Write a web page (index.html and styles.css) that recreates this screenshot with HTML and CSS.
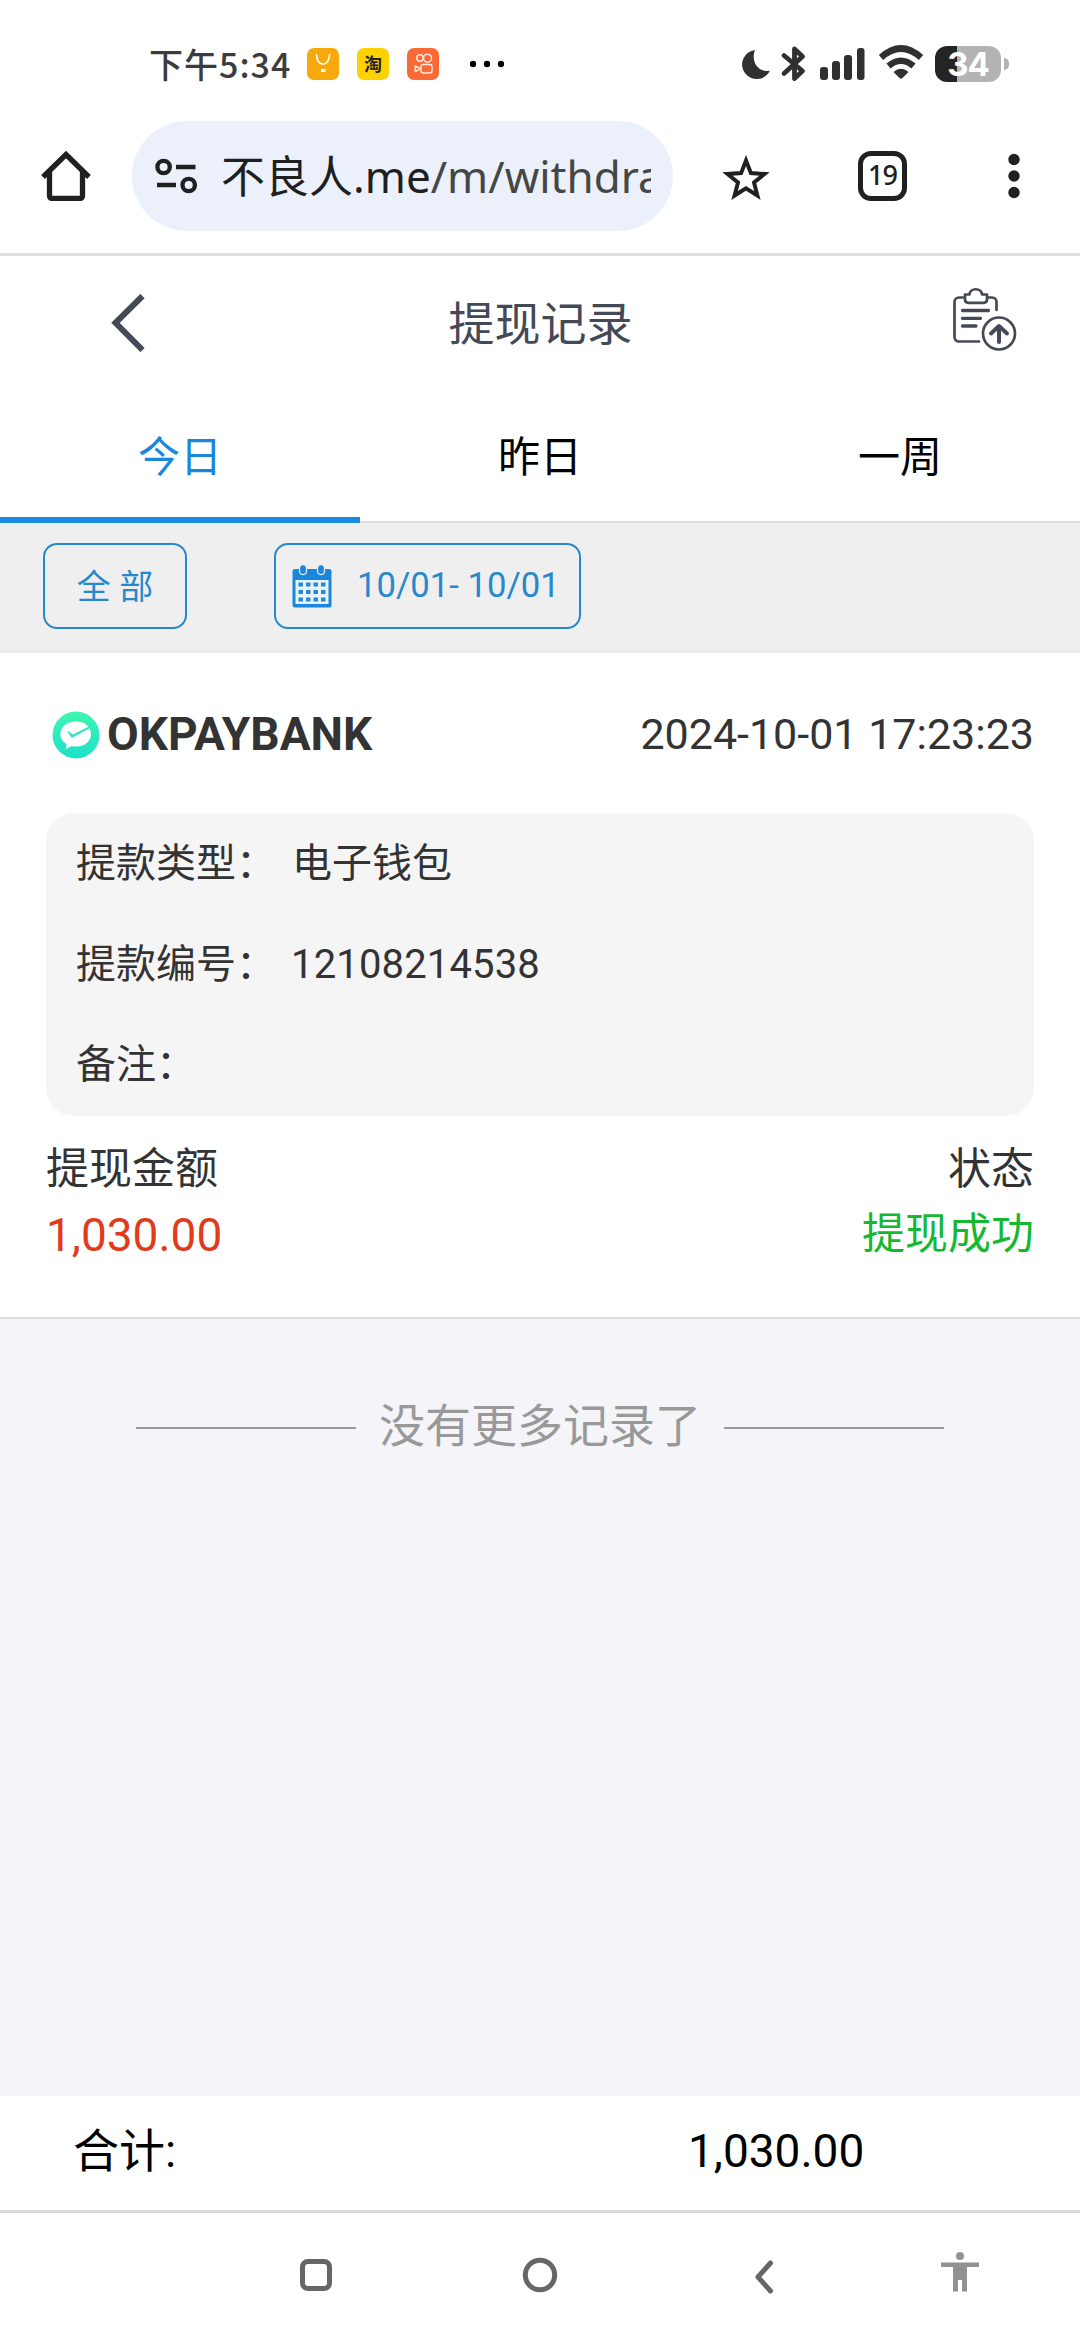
FILE: index.html
```html
<!DOCTYPE html>
<html lang="zh-CN">
<head>
<meta charset="utf-8">
<title>提现记录</title>
<link rel="stylesheet" href="styles.css">
</head>
<body>
<div class="status">
  <span class="clock">下午5:34</span>
  <div class="apps">
    <svg width="32" height="32" viewBox="0 0 32 32"><rect width="32" height="32" rx="7" fill="#f6a90d"/><path d="M9.500 6.500c0 13 13 13 13 0" fill="none" stroke="#fff" stroke-width="1.600" stroke-linecap="round"/><rect x="14" y="21" width="4.500" height="3" fill="#fff"/></svg>
    <span class="tao">淘</span>
    <svg width="32" height="32" viewBox="0 0 32 32"><rect width="32" height="32" rx="7" fill="#fb6a36"/><g fill="none" stroke="#ffe9df" stroke-width="1.500"><circle cx="13" cy="10" r="3.200"/><circle cx="20.500" cy="10.200" r="4"/><rect x="14" y="16.500" width="11" height="8.500" rx="2.200"/><path d="M13.500 20.700l-5.300-2.900v5.800z" stroke-linejoin="round"/></g></svg>
  </div>
  <svg class="more" width="34" height="8" viewBox="0 0 34 8"><circle cx="3" cy="4" r="3.200"/><circle cx="17" cy="4" r="3.200"/><circle cx="31" cy="4" r="3.200"/></svg>
  <svg class="signals" width="184" height="40" viewBox="741 44 184 40" fill="#303030">
    <path d="M755 50A14.600 14.600 0 1 0 770 70.500C760 73.500 750 63 755 50z"/>
    <path d="M784 55.500L802.500 71l-8 7.500V49l8 7.500L784 73.500" fill="none" stroke="#303030" stroke-width="4.800" stroke-linecap="round" stroke-linejoin="round"/>
    <rect x="820" y="67" width="8" height="13" rx="3"/><rect x="832" y="61" width="8" height="19" rx="3"/><rect x="844" y="55" width="8" height="25" rx="3"/><rect x="857" y="48" width="7.500" height="32" rx="3"/>
    <path d="M881 57.500q20-18 40 0M888.500 66q12.500-10.500 25 0" fill="none" stroke="#303030" stroke-width="6.500"/>
    <path d="M893.500 72q7.500-6.500 15 0l-6 6q-1.500 1.500-3 0z"/>
  </svg>
  <span class="battery">34</span><i class="nub"></i>
</div>

<div class="browser">
  <svg width="50" height="50" viewBox="41 151 50 50" class="home"><path d="M43 177l23-22.500L89 177M49.500 171.500V196a2.500 2.500 0 0 0 2.500 2.500h28a2.500 2.500 0 0 0 2.500-2.500v-24.500" fill="none" stroke="#202020" stroke-width="5.300"/></svg>
  <div class="omnibox">
    <svg width="42" height="38" viewBox="155 157 42 38" fill="none" stroke="#202020" stroke-width="4.300"><circle cx="163.600" cy="167" r="6.200"/><path d="M176 167h19.500M157 185h19"/><circle cx="188.700" cy="185" r="6.200"/></svg>
    <div class="url"><b>不良人</b><em>.me</em>/m/withdra</div>
  </div>
  <svg class="star" width="48" height="46" viewBox="721 155 48 46"><path d="M745 160.500l4.900 12.600 13.600.9-10.500 8.500 3.400 13-11.400-7.200-11.400 7.200 3.400-13-10.500-8.500 13.600-.9z" fill="none" stroke="#202020" stroke-width="4"/></svg>
  <span class="tabcount">19</span>
  <svg class="kebab" width="12" height="46" viewBox="0 0 12 46" fill="#202020"><circle cx="6" cy="6.500" r="5.700"/><circle cx="6" cy="23" r="5.700"/><circle cx="6" cy="39.500" r="5.700"/></svg>
</div>

<header class="head">
  <svg width="34" height="58" viewBox="0 0 34 58"><path d="M31.500 2L4.500 28.800 31.500 56" fill="none" stroke="#444956" stroke-width="6"/></svg>
  <h1>提现记录</h1>
  <svg class="clipboard" width="64" height="64" viewBox="953 286 64 64" fill="none" stroke="#444956" stroke-width="2.700" stroke-linecap="round" stroke-linejoin="round"><path d="M963 296.500h-4a4.500 4.500 0 0 0-4.500 4.500v35a4.500 4.500 0 0 0 4.500 4.500h20M988 296.500h4a4.500 4.500 0 0 1 4.500 4.500v8"/><path d="M965 293.500h4.500c.5-7 12-7 12.500 0h5v5q0 3.300-3.500 3.300h-15q-3.500 0-3.500-3.300z"/><path d="M962.500 309.500h26M962.500 317.300h18M962.500 325h13.500" stroke-width="3.300"/><circle cx="999" cy="332.500" r="16"/><path d="M999 341v-15M991 332.500l8-7.500 8 7.500" stroke-width="4"/></svg>
</header>
<nav class="tabs"><span class="on">今日</span><span>昨日</span><span>一周</span></nav>
<div class="filters">
  <span class="chip all">全 部</span>
  <span class="chip date">
    <svg width="40" height="44" viewBox="0 0 40 44"><path d="M3 5h34q2.500 0 2.500 2.500V41q0 2.500-2.500 2.500H3Q.5 43.500.5 41V7.500Q.5 5 3 5z" fill="#1a87dc"/><path d="M3.500 16h33v24h-33z" fill="#e3f4fd"/><g fill="#1a87dc" stroke="#efefef" stroke-width="1.200"><rect x="7.500" y=".6" width="7" height="10" rx="3.500"/><rect x="25.500" y=".6" width="7" height="10" rx="3.500"/></g><path d="M6.500 20.500h27M6.500 28h27M6.500 35.500h27" stroke="#2b86cb" stroke-width="4.200" stroke-dasharray="4.500 3"/></svg>
    <span>10/01- 10/01</span>
  </span>
</div>

<section class="record">
  <div class="top">
    <svg width="48" height="48" viewBox="0 0 48 48"><defs><linearGradient id="g" x2="0" y2="1"><stop offset="0" stop-color="#3ff5ae"/><stop offset="1" stop-color="#1de0cd"/></linearGradient></defs><circle cx="24" cy="24" r="23.500" fill="url(#g)"/><path d="M24 10.500c20 0 20 25 0 25-2 0-3 0-4.500-.5l-5.500 3 .5-5C3 26 8.500 10.500 24 10.500z" fill="#fff"/><path d="M16 20.500l4.500 4L39 15.500 20 26z" fill="#2de8bd" stroke="#2de8bd" stroke-width="1.500"/></svg>
    <strong>OKPAYBANK</strong>
    <time>2024-10-01 17:23:23</time>
  </div>
  <dl class="info">
    <dt>提款类型：</dt><dd>电子钱包</dd>
    <dt>提款编号：</dt><dd class="num">12108214538</dd>
    <dt>备注：</dt><dd></dd>
  </dl>
  <div class="sum"><span>提现金额</span><span>状态</span></div>
  <div class="sum vals"><span class="amount">1,030.00</span><span class="ok">提现成功</span></div>
</section>
<div class="end"><i></i><span>没有更多记录了</span><i></i></div>

<footer class="total"><span>合计:</span><span class="tv">1,030.00</span></footer>
<div class="sysnav">
  <svg width="34" height="34" viewBox="0 0 34 34"><rect x="3.500" y="3.500" width="27" height="27" rx="5.500"/></svg>
  <svg width="36" height="36" viewBox="0 0 36 36"><circle cx="18" cy="18" r="14.700"/></svg>
  <svg width="20" height="34" viewBox="0 0 20 34"><path d="M16.500 3L4 17l12.500 14" stroke-linecap="round" stroke-linejoin="round"/></svg>
  <svg width="38" height="40" viewBox="0 0 38 40" class="man"><circle cx="19" cy="4" r="4"/><path d="M0 10.500h38v4.500H26v24.500h-5V28h-4v11.500h-5V15H0z"/></svg>
</div>
</body>
</html>
```
FILE: styles.css
```css
* { box-sizing: border-box; margin: 0; padding: 0; }
body {
  width: 1080px;
  height: 2340px;
  display: flex;
  flex-direction: column;
  overflow: hidden;
  background: #f4f4f9;
  font-family: Roboto, "Noto Sans CJK SC", sans-serif;
  color: #333;
  white-space: nowrap;
}
svg { display: block; flex: none; }

.status {
  height: 110px;
  background: #fff;
  display: flex;
  align-items: flex-start;
  padding: 0 71px 0 149px;
}
.clock {
  width: 158px;
  margin-top: 44px;
  font: 500 34px/40px "Noto Sans CJK SC", sans-serif;
  letter-spacing: 1px;
  color: #3c3c3c;
}
.apps { display: flex; gap: 18px; margin-top: 48px; }
.tao {
  width: 32px;
  height: 32px;
  border-radius: 7px;
  background: #fdd200;
  color: #222;
  font: 700 18px/31px "Noto Sans CJK SC", sans-serif;
  text-align: center;
}
.more { margin: 60px 0 0 31px; }
.signals { margin: 44px 10px 0 auto; }
.battery {
  margin-top: 46px;
  width: 66px;
  height: 36px;
  border-radius: 12px;
  background: linear-gradient(90deg, #242424 22px, #b3b3b3 22px);
  color: #fff;
  font: 700 33px/36px Inter, sans-serif;
  letter-spacing: -1px;
  text-align: center;
}
.nub { margin: 58px 0 0 3px; width: 5px; height: 12px; background: #b3b3b3; border-radius: 0 6px 6px 0; }

.browser {
  height: 146px;
  background: #fff;
  border-bottom: 3px solid #e0e0e0;
  display: flex;
  align-items: flex-start;
  padding: 11px 60px 0 41px;
}
.home { margin-top: 30px; }
.omnibox {
  width: 541px;
  height: 110px;
  margin-left: 41px;
  border-radius: 55px;
  background: #ebf0fa;
  display: flex;
  align-items: center;
  padding: 0 22px 0 23px;
}
.url {
  margin-left: 24px;
  width: 430px;
  overflow: hidden;
  font: 400 44px/60px "Noto Sans", "Noto Sans CJK SC", sans-serif;
  color: #444746;
}
.url b, .url em { font-weight: 400; font-style: normal; color: #1f1f1f; }
.star { margin: 34px 0 0 49px; }
.tabcount {
  margin: 30px 0 0 88px;
  width: 50px;
  height: 50px;
  border: 5.500px solid #202020;
  border-radius: 13px;
  font: 500 27px/38px "Noto Sans", sans-serif;
  letter-spacing: -1px;
  text-align: center;
  color: #202020;
}
.kebab { margin: 32px 0 0 101px; }

.head {
  height: 134px;
  background: #fff;
  display: grid;
  grid-template-columns: 64px 1fr 64px;
  align-items: center;
  padding: 0 63px 0 111px;
}
.head h1 {
  font-size: 46px;
  line-height: 64px;
  font-weight: 400;
  color: #444956;
  text-align: center;
  padding: 1px 47px 0 0;
}
.clipboard { margin-bottom: 9px; }
.tabs {
  height: 133px;
  background: #fff;
  border-bottom: 2px solid #ddd;
  display: grid;
  grid-template-columns: repeat(3, 1fr);
  text-align: center;
  font-size: 42px;
  line-height: 136px;
  color: #000;
}
.tabs span { height: 133px; }
.tabs .on { color: #1a87dc; border-bottom: 6px solid #1a8be0; }
.filters {
  height: 130px;
  background: #efefef;
  border-bottom: 2px solid #eaeaea;
  display: flex;
  padding: 20px 43px;
  gap: 87px;
}
.chip {
  height: 86px;
  border: 2px solid #2788cd;
  border-radius: 14px;
  color: #2788cd;
  font-size: 34.700px;
  display: flex;
  align-items: center;
}
.chip.all { width: 144px; justify-content: center; font-size: 34px; padding-bottom: 3px; }
.chip.date { width: 307px; padding-left: 16px; gap: 25px; }
.chip.date span { padding-bottom: 2px; }

.record { height: 666px; background: #fff; border-bottom: 2px solid #dcdcde; padding: 0 46px; }
.top { height: 160px; display: flex; align-items: center; padding: 4px 0 0 6px; }
.top strong { font-size: 46px; margin-left: 7px; padding-bottom: 3px; }
.top time { font-size: 43px; margin-left: auto; padding-bottom: 2px; }
.info {
  height: 303px;
  border-radius: 28px;
  background: #f5f5f5;
  padding: 0 30px;
  display: grid;
  grid-template-columns: 216px 1fr;
  grid-template-rows: repeat(3, 100.500px);
  font-size: 40px;
  line-height: 101px;
}
.num { letter-spacing: 0.15px; margin-left: -1px; }
.sum { display: flex; justify-content: space-between; font-size: 43px; line-height: 64px; height: 64px; margin-top: 21px; }
.vals { margin-top: 1px; }
.amount { color: #e23a1c; font-size: 46px; line-height: 66px; }
.ok { color: #15b830; }

.end { display: flex; justify-content: center; align-items: center; height: 70px; margin-top: 71px; gap: 23px; color: #999; font-size: 46px; }
.end span { padding-bottom: 7px; }
.end i { width: 220px; height: 2px; background: #999; margin-top: 6px; }

.total {
  margin-top: auto;
  height: 117px;
  background: #fff;
  border-bottom: 3px solid #d8d8d8;
  color: #000;
  font-size: 46px;
  line-height: 111px;
  display: grid;
  grid-template-columns: 615px 1fr;
  padding-left: 73px;
}
.tv { font-size: 46px; }
.sysnav {
  height: 127px;
  background: #fff;
  display: grid;
  grid-template-columns: 223px 232px 187px 1fr;
  align-items: start;
  padding: 39px 0 0 299px;
}
.sysnav svg { fill: none; stroke: #666; stroke-width: 5; margin-top: 6px; }
.sysnav svg:nth-child(2) { margin-top: 5px; }
.sysnav svg:nth-child(3) { margin-top: 8px; }
.sysnav .man { fill: #929292; stroke: none; margin-top: 0; }
```
